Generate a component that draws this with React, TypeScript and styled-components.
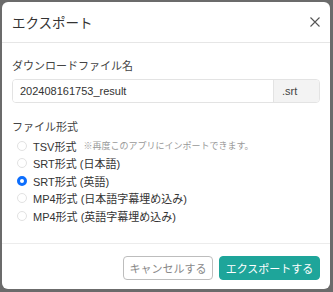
import styled, { createGlobalStyle } from "styled-components";

const GlobalStyle = createGlobalStyle`
  html, body {
    margin: 0;
    padding: 0;
    background: #6b6b6b;
    font-family: "Liberation Sans", "Noto Sans CJK JP", sans-serif;
  }
`;

const formats = [
  { label: "TSV形式", note: "※再度このアプリにインポートできます。" },
  { label: "SRT形式 (日本語)" },
  { label: "SRT形式 (英語)", checked: true },
  { label: "MP4形式 (日本語字幕埋め込み)" },
  { label: "MP4形式 (英語字幕埋め込み)" },
];

function App() {
  return (
    <Backdrop>
      <GlobalStyle />
      <Modal>
        <Header>
          <Title>エクスポート</Title>
          <CloseIcon viewBox="0 0 10 10">
            <path d="M0.5 0.5 L9.5 9.5 M9.5 0.5 L0.5 9.5" />
          </CloseIcon>
        </Header>
        <Body>
          <Label>ダウンロードファイル名</Label>
          <InputGroup>
            <Input defaultValue="202408161753_result" />
            <Addon>.srt</Addon>
          </InputGroup>
          <Label $top={17}>ファイル形式</Label>
          <RadioList>
            {formats.map((f) => (
              <RadioRow key={f.label}>
                <RadioDot $checked={!!f.checked} />
                <RadioText>{f.label}</RadioText>
                {f.note && <Note>{f.note}</Note>}
              </RadioRow>
            ))}
          </RadioList>
        </Body>
        <Footer>
          <CancelButton>キャンセルする</CancelButton>
          <ExportButton>エクスポートする</ExportButton>
        </Footer>
      </Modal>
    </Backdrop>
  );
}

export default App;

const Backdrop = styled.div`
  width: 333px;
  height: 292px;
  box-sizing: border-box;
  padding: 2px 3px 3px 2px;
`;

const Modal = styled.div`
  height: 287px;
  background: #fff;
  border-radius: 6px;
  display: flex;
  flex-direction: column;
  overflow: hidden;
`;

const Header = styled.div`
  height: 40px;
  border-bottom: 1px solid #e6e6e6;
  display: flex;
  align-items: center;
  justify-content: space-between;
  padding: 0 10px;
`;

const Title = styled.div`
  font-size: 13.5px;
  color: #333;
  padding-bottom: 1px;
`;

const CloseIcon = styled.svg`
  width: 10px;
  height: 10px;
  margin-right: 0px;
  stroke: #555;
  stroke-width: 1.1;
  fill: none;
`;

const Body = styled.div`
  flex: 1;
  padding: 16px 10px 0;
  display: flex;
  flex-direction: column;
`;

const Label = styled.div<{ $top?: number }>`
  font-size: 11px;
  line-height: 15px;
  color: #444;
  margin-top: ${(p) => p.$top ?? 0}px;
  margin-bottom: 5px;
`;

const InputGroup = styled.div`
  display: flex;
  height: 24px;
  border: 1px solid #e3e3e3;
  border-radius: 4px;
  box-sizing: border-box;
  overflow: hidden;
`;

const Input = styled.input`
  flex: 1;
  border: 0;
  outline: none;
  padding: 0 7px;
  font-family: inherit;
  font-size: 11px;
  color: #333;
  min-width: 0;
`;

const Addon = styled.div`
  width: 46px;
  box-sizing: border-box;
  border-left: 1px solid #e3e3e3;
  background: #f3f3f3;
  display: flex;
  align-items: center;
  padding-left: 8px;
  font-size: 11px;
  color: #444;
`;

const RadioList = styled.div`
  display: flex;
  flex-direction: column;
  margin-top: -3px;
  padding-left: 5px;
`;

const RadioRow = styled.div`
  height: 17.5px;
  display: flex;
  align-items: center;
`;

const RadioDot = styled.span<{ $checked: boolean }>`
  width: 10px;
  height: 10px;
  border-radius: 50%;
  box-sizing: border-box;
  flex-shrink: 0;
  border: ${(p) => (p.$checked ? "3px solid #0d6efd" : "1px solid #e2e2e2")};
  background: #fff;
  margin-right: 6px;
`;

const RadioText = styled.span`
  font-size: 11px;
  color: #333;
`;

const Note = styled.span`
  font-size: 9px;
  color: #999;
  margin-left: 7px;
`;

const Footer = styled.div`
  border-top: 1px solid #ececec;
  padding: 12px 10px 9px;
  display: flex;
  justify-content: flex-end;
  gap: 6px;
`;

const BaseButton = styled.button`
  height: 24px;
  border-radius: 4px;
  font-family: inherit;
  font-size: 11px;
  padding: 0;
  box-sizing: border-box;
`;

const CancelButton = styled(BaseButton)`
  width: 90px;
  background: #fff;
  border: 1px solid #bdbdbd;
  color: #888;
`;

const ExportButton = styled(BaseButton)`
  width: 101px;
  background: #1ea59a;
  border: 1px solid #1ea59a;
  color: #fff;
`;
